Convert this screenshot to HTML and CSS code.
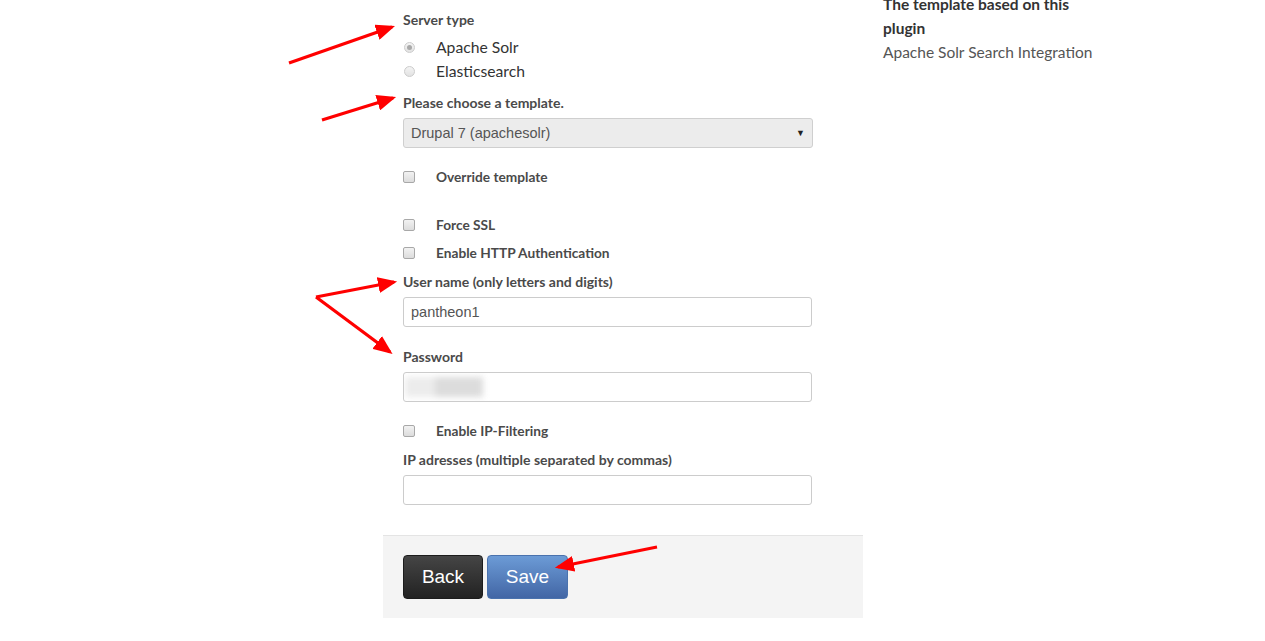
FILE: index.html
```html
<!DOCTYPE html>
<html>
<head>
<meta charset="utf-8">
<link rel="stylesheet" href="styles.css">
</head>
<body>
<div class="page">
  <div class="main">
    <form class="form">
      <div class="label">Server type</div>
      <div class="options">
        <label class="option"><span class="radio checked"></span><span class="opt-text">Apache Solr</span></label>
        <label class="option"><span class="radio"></span><span class="opt-text">Elasticsearch</span></label>
      </div>
      <div class="label g-template">Please choose a template.</div>
      <div class="select"><span>Drupal 7 (apachesolr)</span><span class="caret">▼</span></div>
      <label class="check g-override"><span class="box"></span><span class="check-text">Override template</span></label>
      <label class="check g-ssl"><span class="box"></span><span class="check-text">Force SSL</span></label>
      <label class="check g-auth"><span class="box"></span><span class="check-text">Enable HTTP Authentication</span></label>
      <div class="label g-user">User name (only letters and digits)</div>
      <div class="input">pantheon1</div>
      <div class="label g-pass">Password</div>
      <div class="input"><span class="blur"><span class="b1"></span><span class="b2"></span></span></div>
      <label class="check g-ip"><span class="box"></span><span class="check-text">Enable IP-Filtering</span></label>
      <div class="label g-ips">IP adresses (multiple separated by commas)</div>
      <div class="input"></div>
    </form>
    <div class="actions">
      <button class="btn btn-back" type="button">Back</button>
      <button class="btn btn-save" type="button">Save</button>
    </div>
  </div>
  <aside class="side">
    <div class="side-title">The template based on this plugin</div>
    <div class="side-text">Apache Solr Search Integration</div>
  </aside>
</div>
<svg class="arrows" width="1265" height="641" viewBox="0 0 1265 641">
  <defs>
    <marker id="ah" markerWidth="6" markerHeight="5" refX="5" refY="2.5" orient="auto" markerUnits="strokeWidth">
      <path d="M0,0 L6,2.5 L0,5 Z" fill="#f00"/>
    </marker>
  </defs>
  <g stroke="#f00" stroke-width="3.2" fill="none" marker-end="url(#ah)">
    <line x1="289" y1="63" x2="392" y2="27"/>
    <line x1="322" y1="120" x2="393" y2="98"/>
    <line x1="316" y1="297" x2="394" y2="282"/>
    <line x1="316" y1="297" x2="390" y2="352"/>
    <line x1="657" y1="547" x2="558" y2="567"/>
  </g>
</svg>
</body>
</html>
```
FILE: styles.css
```css
html, body {
  margin: 0;
  padding: 0;
  background: #fff;
}
body {
  font-family: Lato, "Open Sans", sans-serif;
  color: #444;
  overflow: hidden;
  height: 641px;
  position: relative;
}
.page {
  display: flex;
  align-items: flex-start;
  padding-left: 383px;
}
.main {
  width: 480px;
  display: flex;
  flex-direction: column;
}
.form {
  display: flex;
  flex-direction: column;
  padding: 11px 50px 30px 20px;
  margin: 0;
}
.label {
  font-size: 14px;
  font-weight: bold;
  line-height: 18px;
  color: #4a4a4a;
  margin-bottom: 6px;
}
.options {
  display: flex;
  flex-direction: column;
}
.option, .check {
  display: flex;
  align-items: center;
  height: 24px;
}
.radio {
  width: 11px;
  height: 11px;
  border-radius: 50%;
  border: 1px solid #ccc;
  background: linear-gradient(#f4f4f4, #e2e2e2);
  box-sizing: border-box;
  margin-left: 1px;
  margin-right: 21px;
  position: relative;
}
.radio.checked::after {
  content: "";
  position: absolute;
  left: 2px;
  top: 2px;
  width: 5px;
  height: 5px;
  border-radius: 50%;
  background: #a9a9a9;
}
.opt-text {
  font-size: 15.7px;
  color: #333;
}
.g-template { margin-top: 11px; }
.select {
  height: 30px;
  box-sizing: border-box;
  border: 1px solid #cfcfcf;
  border-radius: 3px;
  background: #ececec;
  display: flex;
  align-items: center;
  justify-content: space-between;
  padding: 0 7px 0 7px;
  font-family: "Liberation Sans", Arial, sans-serif;
  font-size: 14.5px;
  color: #555;
}
.caret {
  font-size: 9px;
  color: #222;
}
.box {
  width: 12px;
  height: 12px;
  box-sizing: border-box;
  border: 1px solid #a8a8a8;
  border-radius: 2px;
  background: linear-gradient(#f2f2f2, #dcdcdc);
  margin-right: 21px;
}
.check-text {
  font-size: 13.7px;
  font-weight: bold;
  color: #4a4a4a;
  margin-top: -1px;
}
.g-override { margin-top: 17px; }
.g-ssl { margin-top: 24px; }
.g-auth { margin-top: 4px; }
.g-user { margin-top: 8px; }
.g-pass { margin-top: 21px; }
.g-ip { margin-top: 17px; }
.g-ips { margin-top: 8px; }
.input {
  height: 30px;
  box-sizing: border-box;
  border: 1px solid #ccc;
  border-radius: 3px;
  background: #fff;
  display: flex;
  align-items: center;
  padding: 0 7px;
  margin-right: 1px;
  font-family: "Liberation Sans", Arial, sans-serif;
  font-size: 14.5px;
  color: #555;
  overflow: hidden;
}
.blur {
  display: flex;
  align-items: center;
  margin-left: -6px;
  filter: blur(3px);
}
.b1 {
  display: block;
  width: 30px;
  height: 20px;
  background: #ececec;
}
.b2 {
  display: block;
  width: 48px;
  height: 20px;
  background: #dcdcdc;
}
.actions {
  background: #f4f4f4;
  border-top: 1px solid #e4e4e4;
  padding: 19px 20px 19px 20px;
  display: flex;
  gap: 4px;
}
.btn {
  height: 44px;
  border-radius: 4px;
  font-family: "Liberation Sans", Arial, sans-serif;
  font-size: 19px;
  color: #fff;
  padding: 0;
  cursor: pointer;
}
.btn-back {
  width: 80px;
  border: 1px solid #1c1c1c;
  background: linear-gradient(#454545, #222);
}
.btn-save {
  width: 81px;
  border: 1px solid #4a72ad;
  background: linear-gradient(#6c9bd6, #4266a5);
}
.side {
  margin-left: 20px;
  margin-top: -8px;
  width: 215px;
}
.side-title {
  font-size: 15.5px;
  font-weight: bold;
  line-height: 24px;
  color: #333;
}
.side-text {
  font-size: 15.5px;
  line-height: 24px;
  color: #555;
  white-space: nowrap;
}
.arrows {
  position: absolute;
  left: 0;
  top: 0;
  pointer-events: none;
}
```
